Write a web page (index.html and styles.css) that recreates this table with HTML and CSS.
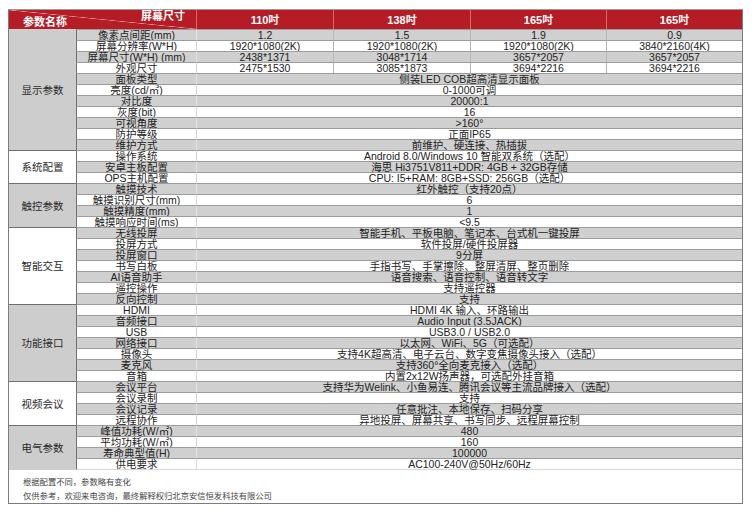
FILE: index.html
```html
<!DOCTYPE html>
<html lang="zh">
<head>
<meta charset="utf-8">
<title>参数表</title>
<link rel="stylesheet" href="styles.css">
</head>
<body>
<div class="sheet">
  <div class="grid">
    <div class="h corner"><span class="tr">屏幕尺寸</span><span class="bl">参数名称</span></div>
    <div class="h">110吋</div>
    <div class="h">138吋</div>
    <div class="h">165吋</div>
    <div class="h">165吋</div>

    <div class="g first alt" style="grid-row: span 11">显示参数</div>
    <div class="p alt">像素点间距(mm)</div><div class="v alt">1.2</div><div class="v alt c">1.5</div><div class="v alt c">1.9</div><div class="v alt c">0.9</div>
    <div class="p">屏幕分辨率(W*H)</div><div class="v">1920*1080(2K)</div><div class="v c">1920*1080(2K)</div><div class="v c">1920*1080(2K)</div><div class="v c">3840*2160(4K)</div>
    <div class="p alt">屏幕尺寸(W*H) (mm)</div><div class="v alt">2438*1371</div><div class="v alt c">3048*1714</div><div class="v alt c">3657*2057</div><div class="v alt c">3657*2057</div>
    <div class="p">外观尺寸</div><div class="v">2475*1530</div><div class="v c">3085*1873</div><div class="v c">3694*2216</div><div class="v c">3694*2216</div>
    <div class="p alt">面板类型</div><div class="v w alt">侧装LED COB超高清显示面板</div>
    <div class="p">亮度(cd/㎡)</div><div class="v w">0-1000可调</div>
    <div class="p alt">对比度</div><div class="v w alt">20000:1</div>
    <div class="p">灰度(bit)</div><div class="v w">16</div>
    <div class="p alt">可视角度</div><div class="v w alt">&gt;160°</div>
    <div class="p">防护等级</div><div class="v w">正面IP65</div>
    <div class="p alt">维护方式</div><div class="v w alt">前维护、硬连接、热插拔</div>

    <div class="g" style="grid-row: span 3">系统配置</div>
    <div class="p">操作系统</div><div class="v w">Android 8.0/Windows 10 智能双系统（选配）</div>
    <div class="p alt">安卓主板配置</div><div class="v w alt">海思 Hi3751V811+DDR: 4GB + 32GB存储</div>
    <div class="p">OPS主机配置</div><div class="v w">CPU: I5+RAM: 8GB+SSD: 256GB（选配）</div>

    <div class="g alt" style="grid-row: span 4">触控参数</div>
    <div class="p alt">触摸技术</div><div class="v w alt">红外触控（支持20点）</div>
    <div class="p">触摸识别尺寸(mm)</div><div class="v w">6</div>
    <div class="p alt">触摸精度(mm)</div><div class="v w alt">1</div>
    <div class="p">触摸响应时间(ms)</div><div class="v w">&lt;9.5</div>

    <div class="g" style="grid-row: span 7">智能交互</div>
    <div class="p alt">无线投屏</div><div class="v w alt">智能手机、平板电脑、笔记本、台式机一键投屏</div>
    <div class="p">投屏方式</div><div class="v w">软件投屏/硬件投屏器</div>
    <div class="p alt">投屏窗口</div><div class="v w alt">9分屏</div>
    <div class="p">书写白板</div><div class="v w">手指书写、手掌擦除、整屏清屏、整页删除</div>
    <div class="p alt">AI语音助手</div><div class="v w alt">语音搜索、语音控制、语音转文字</div>
    <div class="p">遥控操作</div><div class="v w">支持遥控器</div>
    <div class="p alt">反向控制</div><div class="v w alt">支持</div>

    <div class="g alt" style="grid-row: span 7">功能接口</div>
    <div class="p">HDMI</div><div class="v w">HDMI 4K 输入、环路输出</div>
    <div class="p alt">音频接口</div><div class="v w alt">Audio Input (3.5JACK)</div>
    <div class="p">USB</div><div class="v w">USB3.0 / USB2.0</div>
    <div class="p alt">网络接口</div><div class="v w alt">以太网、WiFi、5G（可选配）</div>
    <div class="p">摄像头</div><div class="v w">支持4K超高清、电子云台、数字变焦摄像头接入（选配）</div>
    <div class="p alt">麦克风</div><div class="v w alt">支持360°全向麦克接入（选配）</div>
    <div class="p">音箱</div><div class="v w">内置2x12W扬声器，可选配外挂音箱</div>

    <div class="g" style="grid-row: span 4">视频会议</div>
    <div class="p alt">会议平台</div><div class="v w alt">支持华为Welink、小鱼易连、腾讯会议等主流品牌接入（选配）</div>
    <div class="p">会议录制</div><div class="v w">支持</div>
    <div class="p alt">会议记录</div><div class="v w alt">任意批注、本地保存、扫码分享</div>
    <div class="p">远程协作</div><div class="v w">异地投屏、屏幕共享、书写同步、远程屏幕控制</div>

    <div class="g alt" style="grid-row: span 4">电气参数</div>
    <div class="p alt">峰值功耗(W/㎡)</div><div class="v w alt">480</div>
    <div class="p">平均功耗(W/㎡)</div><div class="v w">160</div>
    <div class="p alt">寿命典型值(H)</div><div class="v w alt">100000</div>
    <div class="p last">供电要求</div><div class="v w last">AC100-240V@50Hz/60Hz</div>
  </div>
  <div class="notes">
    <p>根据配置不同，参数略有变化</p>
    <p>仅供参考，欢迎来电咨询，最终解释权归北京安信恒发科技有限公司</p>
  </div>
</div>
</body>
</html>
```

FILE: styles.css
```css
* { box-sizing: border-box; }
html, body { margin: 0; padding: 0; background: #ffffff; }
body {
  font-family: "Liberation Sans", "Noto Sans CJK SC", sans-serif;
  color: #222;
}
.sheet {
  margin: 9px 0 0 8px;
  width: 735px;
  border: 1px solid #7c7c7c;
  border-top-color: #9a9a9a;
}
.grid {
  display: grid;
  grid-template-columns: 67px 120px 137px 137px 136px 136px;
  grid-template-rows: 19px repeat(39, 11px) 12px;
}
.grid > div {
  display: flex;
  align-items: center;
  justify-content: center;
  white-space: nowrap;
  font-size: 10.5px;
  line-height: 10px;
}
.h {
  background: #b51c25;
  color: #fff;
  font-weight: bold;
  border-left: 1px solid #cf6a70;
}
.grid > .h { font-size: 11px; }
.h.corner {
  grid-column: span 2;
  border-left: none;
  position: relative;
  background-color: #b51c25;
  background-image: linear-gradient(to top right, transparent calc(50% - 0.6px), #e29a9e 50%, transparent calc(50% + 0.6px));
}
.corner .tr { position: absolute; right: 11px; top: 1px; line-height: 11px; }
.corner .bl { position: absolute; left: 14px; bottom: 1px; line-height: 11px; }

.g {
  grid-column: 1;
  background: #ffffff;
  border-top: 1px solid #6f6f6f;
  color: #2a2a2a;
}
.g.first { border-top: none; }
.g.alt { background: #cdcdcd; }

.p {
  grid-column: 2;
  background: #fff;
  border-top: 1px solid #9c9c9c;
  border-left: 1px solid #6f6f6f;
}
.v {
  background: #fff;
  border-top: 1px solid #9c9c9c;
  border-left: 1px solid #d4d4d4;
}
.v.c { border-left-color: #b4b4b4; }
.v.w { grid-column: span 4; }
.alt { background: #d0d0d0; }
.v.alt { border-left-color: #e2e2e2; }
.v.alt.c { border-left-color: #b8b8b8; }
.last { border-bottom: 1px solid #d8d8d8; }

.notes {
  height: 33px;
  padding: 4px 0 0 14px;
  color: #444;
  font-family: "Noto Sans CJK SC", sans-serif;
}
.notes p {
  margin: 0;
  font-size: 8.3px;
  line-height: 14px;
}
```
